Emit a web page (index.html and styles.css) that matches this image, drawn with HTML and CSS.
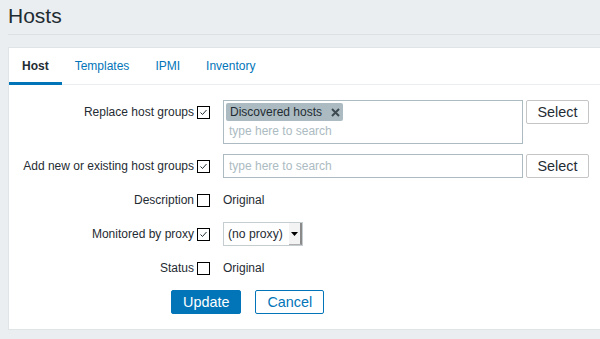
FILE: index.html
```html
<!DOCTYPE html>
<html>
<head>
<meta charset="utf-8">
<link rel="stylesheet" href="styles.css">
</head>
<body>
<div class="page">
  <header class="header"><h1>Hosts</h1></header>
  <main class="card">
    <nav class="tabs">
      <a class="tab active">Host</a>
      <a class="tab">Templates</a>
      <a class="tab">IPMI</a>
      <a class="tab">Inventory</a>
    </nav>
    <form class="form">
      <label class="lbl">Replace host groups <span class="cb checked"><svg viewBox="0 0 13 13"><path d="M3.5 6.5 L5.5 8.5 L9.5 4" fill="none" stroke="#1f2c33" stroke-width="1"/></svg></span></label>
      <div class="field">
        <div class="multiselect">
          <span class="chip">Discovered hosts <svg class="x" viewBox="0 0 9 9"><path d="M1 1 L8 8 M8 1 L1 8" stroke="#3d4a50" stroke-width="2"/></svg></span>
          <span class="ph ms-ph">type here to search</span>
        </div>
        <button type="button" class="btn-grey">Select</button>
      </div>

      <label class="lbl">Add new or existing host groups <span class="cb checked"><svg viewBox="0 0 13 13"><path d="M3.5 6.5 L5.5 8.5 L9.5 4" fill="none" stroke="#1f2c33" stroke-width="1"/></svg></span></label>
      <div class="field">
        <div class="input"><span class="ph">type here to search</span></div>
        <button type="button" class="btn-grey">Select</button>
      </div>

      <label class="lbl">Description <span class="cb"></span></label>
      <div class="field"><span class="val">Original</span></div>

      <label class="lbl">Monitored by proxy <span class="cb checked"><svg viewBox="0 0 13 13"><path d="M3.5 6.5 L5.5 8.5 L9.5 4" fill="none" stroke="#1f2c33" stroke-width="1"/></svg></span></label>
      <div class="field">
        <div class="dropdown"><span class="dd-text">(no proxy)</span><span class="dd-arrow"><svg viewBox="0 0 7 4"><path d="M0 0 H7 L3.5 4 Z" fill="#000"/></svg></span></div>
      </div>

      <label class="lbl">Status <span class="cb"></span></label>
      <div class="field"><span class="val">Original</span></div>

      <div class="actions">
        <button type="button" class="btn-main">Update</button>
        <button type="button" class="btn-alt">Cancel</button>
      </div>
    </form>
  </main>
</div>
</body>
</html>
```
FILE: styles.css
```css
* { box-sizing: border-box; }
html, body { margin: 0; padding: 0; }
body {
  background: #ebeef0;
  font-family: "Liberation Sans", Arial, sans-serif;
  font-size: 12px;
  color: #1f2c33;
  overflow: hidden;
  width: 600px;
  height: 339px;
}
.page { padding-left: 8px; }
.header {
  padding: 4px 0 6px;
  border-bottom: 1px solid #dbe0e3;
}
.header h1 {
  margin: 0;
  font-size: 21px;
  line-height: 24px;
  font-weight: normal;
  color: #1f2c33;
}
.card {
  margin-top: 12px;
  background: #fff;
  border: 1px solid #dfe4e7;
  border-right: none;
  padding-bottom: 15px;
}
.tabs {
  display: flex;
  border-bottom: 1px solid #ebeef0;
}
.tab {
  padding: 11px 13px 9px;
  line-height: 14px;
  color: #0275b8;
  border-bottom: 3px solid transparent;
  margin-bottom: -1px;
}
.tab.active {
  color: #1f2c33;
  font-weight: bold;
  border-bottom-color: #0275b8;
}
.form {
  display: grid;
  grid-template-columns: 201px 1fr;
  column-gap: 13px;
  row-gap: 10px;
  padding-top: 15px;
}
.lbl {
  display: flex;
  justify-content: flex-end;
  align-items: center;
  gap: 3px;
  height: 24px;
  white-space: nowrap;
}
.cb {
  width: 13px;
  height: 13px;
  border: 1px solid #000;
  background: #fff;
  display: inline-block;
  position: relative;
}
.cb svg {
  position: absolute;
  left: -1px;
  top: -1px;
  width: 13px;
  height: 13px;
}
.field {
  display: flex;
  align-items: flex-start;
  gap: 3px;
  min-height: 24px;
}
.val { line-height: 24px; }
.multiselect {
  width: 300px;
  height: 44px;
  border: 1px solid #acbbc2;
  padding: 2px 2px 0;
  display: flex;
  flex-direction: column;
  align-items: flex-start;
}
.chip {
  display: inline-flex;
  align-items: center;
  gap: 9px;
  height: 18px;
  padding: 0 3px 0 4px;
  background: #acbbc2;
  border-radius: 2px;
  color: #1f2c33;
}
.chip .x { width: 9px; height: 9px; }
.ph { color: #acbbc2; }
.ms-ph {
  line-height: 20px;
  padding-left: 3px;
}
.input {
  width: 300px;
  height: 24px;
  border: 1px solid #acbbc2;
  padding-left: 5px;
  line-height: 22px;
}
.btn-grey {
  width: 63px;
  height: 24px;
  background: #fff;
  border: 1px solid #c5c5c5;
  border-radius: 2px;
  font-family: inherit;
  font-size: 14.4px;
  color: #1f2c33;
  padding: 0;
}
.dropdown {
  width: 80px;
  height: 24px;
  border: 1px solid #c5cdd1;
  display: flex;
  align-items: stretch;
}
.dd-text {
  flex: 1;
  padding-left: 4px;
  line-height: 22px;
  font-size: 12.2px;
  color: #1f2c33;
  white-space: nowrap;
}
.dd-arrow {
  width: 13px;
  background: #f3f3f3;
  border-right: 2px solid #8a8a8a;
  border-bottom: 1px solid #b0b0b0;
  display: flex;
  align-items: center;
  justify-content: center;
}
.dd-arrow svg { width: 7px; height: 4px; }
.actions {
  grid-column: 1 / -1;
  display: flex;
  gap: 14px;
  padding-left: 162px;
}
.btn-main, .btn-alt {
  height: 24px;
  padding: 0 11px;
  font-family: inherit;
  font-size: 14.4px;
  border-radius: 2px;
  border: 1px solid #0275b8;
}
.btn-main { background: #0275b8; color: #fff; }
.btn-alt { background: #fff; color: #0275b8; }
```
